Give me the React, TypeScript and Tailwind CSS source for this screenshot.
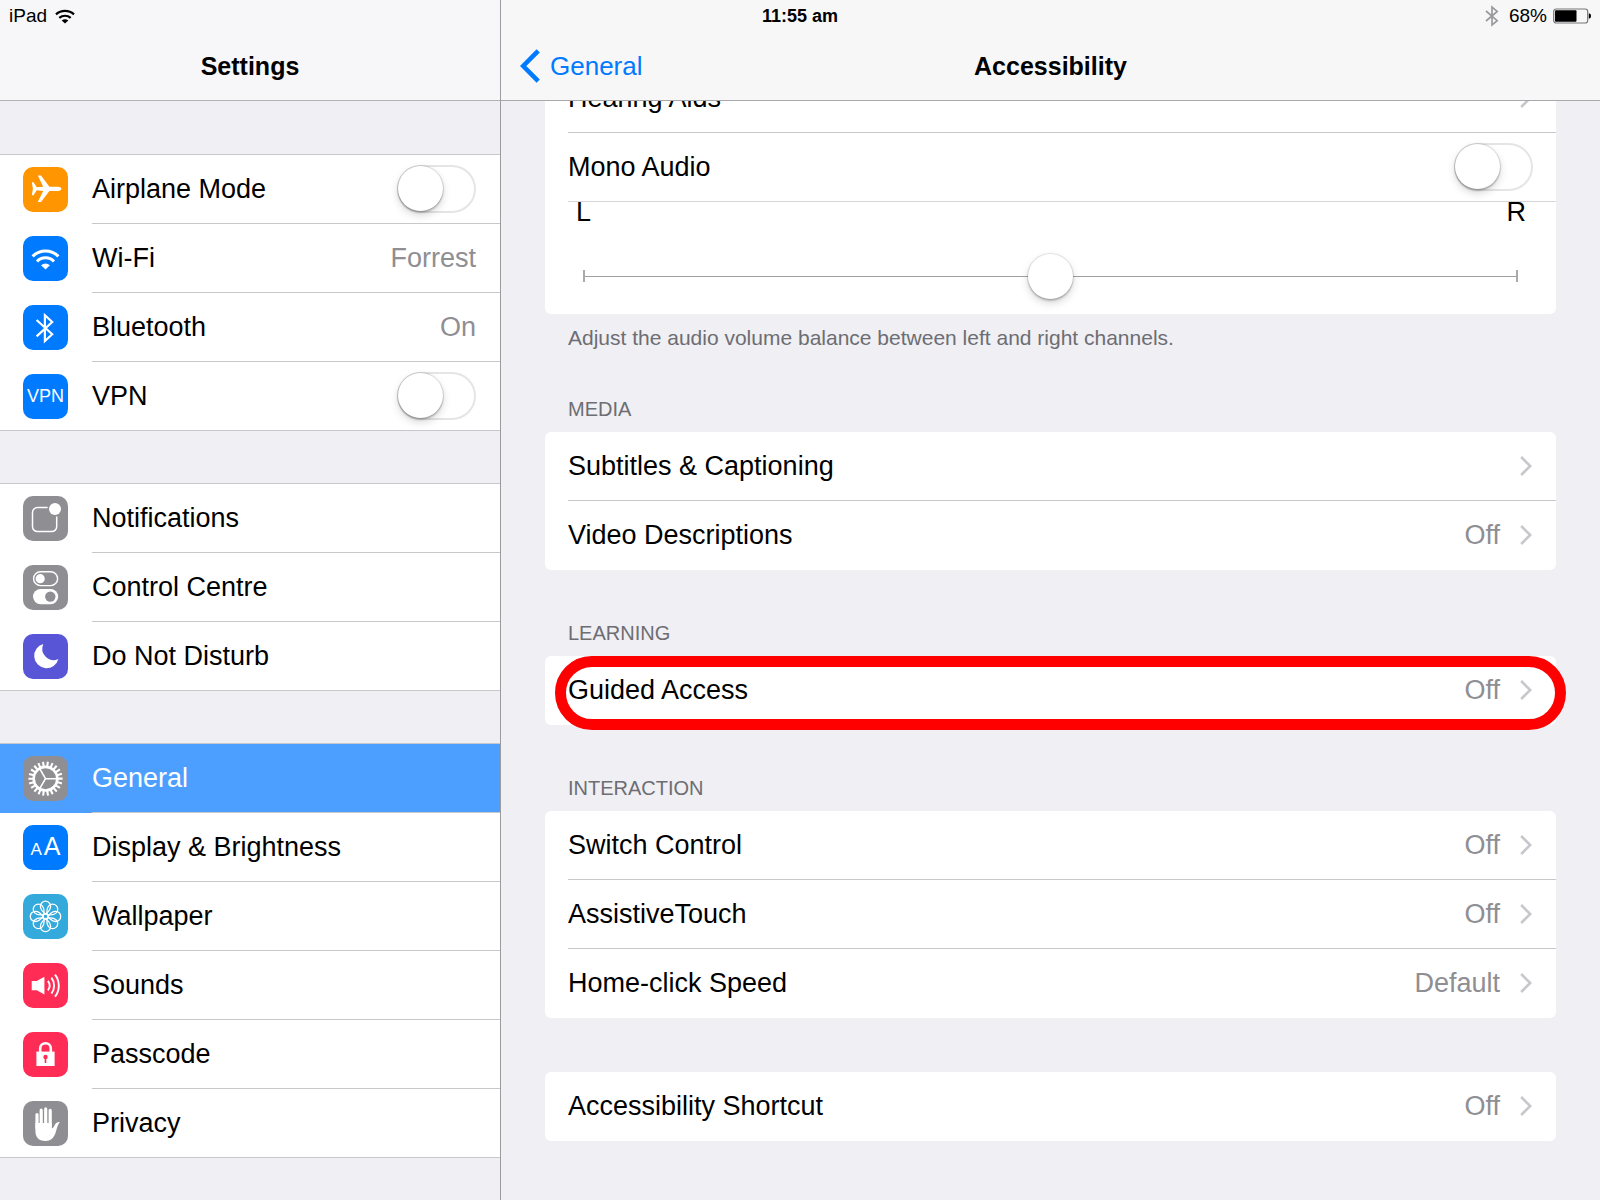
import type { ReactNode } from 'react';

/* ---------- Icons: every tile glyph is drawn on a 45 x 45 grid ---------- */

function Tile({ color, children }: { color: string; children: ReactNode }) {
  return (
    <span className={`flex size-[45px] shrink-0 items-center justify-center overflow-hidden rounded-[10px] text-white ${color}`}>
      {children}
    </span>
  );
}

function Glyph({ children }: { children: ReactNode }) {
  return (
    <svg viewBox="0 0 45 45" className="size-[45px]" fill="none" aria-hidden="true">
      {children}
    </svg>
  );
}

const AirplaneIcon = () => (
  <Tile color="bg-[#ff9500]">
    <Glyph>
      <path
        fill="#fff"
        d="M38.4 21.8c0-1.3-1.5-2.1-3.4-2.1h-8.6L18 8.6h-3.2l5.4 11.1-6.4.6-3.3-5H8.8l1.1 6.5-1.1 6.5h1.7l3.3-5 6.4.6-5.4 11.1H18l8.4-11.1H35c1.9 0 3.4-.8 3.4-2.1z"
      />
    </Glyph>
  </Tile>
);

const WifiTileIcon = () => (
  <Tile color="bg-[#007aff]">
    <Glyph>
      <path d="M9.6 20.400A18 18 0 0 1 35.4 20.400" stroke="#fff" strokeWidth="3" />
      <path d="M14 25.500A11.6 11.6 0 0 1 31 25.500" stroke="#fff" strokeWidth="3" />
      <path d="M22.5 33.4 18 29.2Q22.5 25.7 27 29.2z" fill="#fff" />
    </Glyph>
  </Tile>
);

const BluetoothTileIcon = () => (
  <Tile color="bg-[#007aff]">
    <Glyph>
      <path d="M13.6 15 29.2 29.2 21.9 36V10.200L29.2 17 13.6 31.4" stroke="#fff" strokeWidth="2.200" />
    </Glyph>
  </Tile>
);

const VpnIcon = () => (
  <Tile color="bg-[#007aff]">
    <span className="text-[18px] leading-5" aria-hidden="true">VPN</span>
  </Tile>
);

const NotificationsIcon = () => (
  <Tile color="bg-[#8e8e93]">
    <Glyph>
      <path d="M24.6 11.6H14.5a5 5 0 0 0-5 5v14a5 5 0 0 0 5 5h14.200a5 5 0 0 0 5-5V20.400" stroke="#fff" strokeWidth="1.5" />
      <circle cx="32" cy="13" r="6" fill="#fff" />
    </Glyph>
  </Tile>
);

const ControlCentreIcon = () => (
  <Tile color="bg-[#8e8e93]">
    <Glyph>
      <rect x="10.600" y="6.800" width="24" height="13.800" rx="6.900" stroke="#fff" strokeWidth="1.400" />
      <circle cx="17.200" cy="13.700" r="4.600" fill="#fff" />
      <rect x="10" y="24" width="25.200" height="15.200" rx="7.600" fill="#fff" />
      <circle cx="27.300" cy="31.600" r="5.200" fill="#8e8e93" />
    </Glyph>
  </Tile>
);

const MoonIcon = () => (
  <Tile color="bg-[#5856d6]">
    <Glyph>
      <path d="M20.300 10A12.300 12.300 0 1 0 35.400 25A11.400 11.400 0 0 1 20.300 10z" fill="#fff" />
    </Glyph>
  </Tile>
);

const TEETH = Array.from({ length: 22 }, (_, i) => (i * 360) / 22 + 8);

const GearIcon = () => (
  <Tile color="bg-[#8e8e93]">
    <Glyph>
      <g stroke="#fff">
        <circle cx="22.500" cy="22.700" r="11.800" strokeWidth="2.600" />
        {TEETH.map((a) => (
          <path key={a} d="M22.500 10.500V5.600" strokeWidth="2.100" transform={`rotate(${a} 22.500 22.700)`} />
        ))}
        <path d="M22.500 22.700H34M22.500 22.700 16.700 12.700M22.500 22.700 16.700 32.700" strokeWidth="1.600" />
      </g>
    </Glyph>
  </Tile>
);

const DisplayIcon = () => (
  <Tile color="bg-[#007aff]">
    <span className="flex items-baseline gap-0.5" aria-hidden="true">
      <span className="text-[17px] leading-6">A</span>
      <span className="text-[25px] leading-6">A</span>
    </span>
  </Tile>
);

const PETALS = [0, 45, 90, 135, 180, 225, 270, 315];

const WallpaperIcon = () => (
  <Tile color="bg-[#34aadc]">
    <Glyph>
      <g stroke="#fff" strokeWidth="1.300">
        {PETALS.map((a) => (
          <path
            key={a}
            d="M22.500 20C20 18.200 17.400 15.600 17.400 12.300A5.100 5.100 0 0 1 27.600 12.300C27.600 15.600 25 18.200 22.500 20z"
            transform={`rotate(${a} 22.500 22.400)`}
          />
        ))}
        <circle cx="22.500" cy="22.400" r="2.500" />
      </g>
    </Glyph>
  </Tile>
);

const SoundsIcon = () => (
  <Tile color="bg-[#ff2d55]">
    <Glyph>
      <path d="M8.700 18H13.800L21.400 13.800V31.500L13.800 27.300H8.700z" fill="#fff" />
      <g stroke="#fff" strokeWidth="1.900">
        <path d="M24.900 17.900A8 8 0 0 1 24.900 27.400" />
        <path d="M28.400 14.700A13 13 0 0 1 28.400 30.600" />
        <path d="M32 11.600A18 18 0 0 1 32 33.700" />
      </g>
    </Glyph>
  </Tile>
);

const PasscodeIcon = () => (
  <Tile color="bg-[#ff2d55]">
    <Glyph>
      <path d="M17.200 20V16.500a5.300 5.300 0 0 1 10.600 0V20" stroke="#fff" strokeWidth="2.600" />
      <rect x="13.400" y="19.600" width="18.200" height="14.400" fill="#fff" />
      <circle cx="22.500" cy="25" r="2.200" fill="#ff2d55" />
      <path d="M22.500 25V31" stroke="#ff2d55" strokeWidth="1.600" />
    </Glyph>
  </Tile>
);

const PrivacyIcon = () => (
  <Tile color="bg-[#8e8e93]">
    <Glyph>
      <path d="M14 27V13.500M18.200 25V9.200M22.700 25V7.900M27.200 25V9.400" stroke="#fff" strokeWidth="3.200" strokeLinecap="round" />
      <path
        d="M12.400 22H28.800V27.500C30 27.400 31 25.800 31.700 24.100C32.600 22 34.400 20.800 36.600 20.900C36.800 21.300 36.500 21.800 36 22.300C34.300 24.500 33.900 28 32.500 32C30.800 37 27.500 40 22.500 40C15.500 40 12.400 36 12.400 30z"
        fill="#fff"
      />
    </Glyph>
  </Tile>
);

const Chevron = () => (
  <svg viewBox="0 0 12 20" className="h-5 w-3 shrink-0" fill="none" aria-hidden="true">
    <path d="M1.200 1 10.200 10 1.200 19" stroke="#c7c7cc" strokeWidth="2.600" />
  </svg>
);

/* ---------- Controls ---------- */

function Toggle({ label }: { label: string }) {
  return (
    <input
      type="checkbox"
      role="switch"
      aria-label={label}
      className="relative h-12 w-[79px] shrink-0 appearance-none rounded-full bg-white shadow-[inset_0_0_0_2px_#e5e5e5] before:absolute before:top-px before:left-px before:size-[45px] before:rounded-full before:bg-white before:shadow-[0_4px_8px_rgba(0,0,0,0.16),0_2px_2px_rgba(0,0,0,0.18),0_0_1px_1px_rgba(0,0,0,0.12)] before:content-['']"
    />
  );
}

/* ---------- Sidebar ---------- */

type SideItem = { label: string; icon: ReactNode; value?: string; toggle?: boolean; selected?: boolean };

const sideGroups: SideItem[][] = [
  [
    { label: 'Airplane Mode', icon: <AirplaneIcon />, toggle: true },
    { label: 'Wi-Fi', icon: <WifiTileIcon />, value: 'Forrest' },
    { label: 'Bluetooth', icon: <BluetoothTileIcon />, value: 'On' },
    { label: 'VPN', icon: <VpnIcon />, toggle: true },
  ],
  [
    { label: 'Notifications', icon: <NotificationsIcon /> },
    { label: 'Control Centre', icon: <ControlCentreIcon /> },
    { label: 'Do Not Disturb', icon: <MoonIcon /> },
  ],
  [
    { label: 'General', icon: <GearIcon />, selected: true },
    { label: 'Display & Brightness', icon: <DisplayIcon /> },
    { label: 'Wallpaper', icon: <WallpaperIcon /> },
    { label: 'Sounds', icon: <SoundsIcon /> },
    { label: 'Passcode', icon: <PasscodeIcon /> },
    { label: 'Privacy', icon: <PrivacyIcon /> },
  ],
];

function SideRow({ item, last }: { item: SideItem; last: boolean }) {
  const row = `flex h-[69px] w-full items-stretch pl-[23px] text-left ${
    item.selected ? 'bg-[#4c9fff] text-white' : 'bg-white text-black'
  } ${last ? 'border-b border-[#c8c7cc]' : ''}`;
  const body = (
    <>
      <span className="flex items-center pr-6">{item.icon}</span>
      <span className={`flex flex-1 items-center justify-between pr-6 ${last ? '' : 'border-b border-[#c8c7cc]'}`}>
        <span>{item.label}</span>
        {item.value && <span className="text-[#8e8e93]">{item.value}</span>}
        {item.toggle && <Toggle label={item.label} />}
      </span>
    </>
  );
  return (
    <li>
      {item.toggle ? (
        <div className={row}>{body}</div>
      ) : (
        <button type="button" className={row} aria-current={item.selected ? 'page' : undefined}>
          {body}
        </button>
      )}
    </li>
  );
}

function Sidebar() {
  return (
    <aside className="flex w-[501px] shrink-0 flex-col border-r border-[#9c9ca0]">
      <header className="flex h-[101px] items-end justify-center border-b border-[#b2b2b2] bg-[#f7f7f9] pb-[18px]">
        <h1 className="text-[25px] font-bold">Settings</h1>
      </header>
      <nav className="flex flex-col gap-[52px] pt-[53px]" aria-label="Settings">
        {sideGroups.map((group, g) => (
          <ul key={g} className="border-t border-[#c8c7cc]">
            {group.map((item, i) => (
              <SideRow key={item.label} item={item} last={i === group.length - 1} />
            ))}
          </ul>
        ))}
      </nav>
    </aside>
  );
}

/* ---------- Detail pane ---------- */

function Card({ children }: { children: ReactNode }) {
  return <div className="rounded-md bg-white pl-[23px]">{children}</div>;
}

function LinkRow({ label, value, last }: { label: string; value?: string; last?: boolean }) {
  return (
    <button
      type="button"
      className={`flex h-[69px] w-full items-center border-b pr-6 text-left ${last ? 'border-transparent' : 'border-[#c8c7cc]'}`}
    >
      <span className="flex-1">{label}</span>
      {value && <span className="pr-5 text-[#8e8e93]">{value}</span>}
      <Chevron />
    </button>
  );
}

function SectionTitle({ children }: { children: ReactNode }) {
  return <h3 className="flex h-[86px] items-end pb-[11px] pl-[23px] text-[20px] leading-6 text-[#6d6d72]">{children}</h3>;
}

function Balance() {
  return (
    <div className="h-28 pr-[30px] pl-2">
      <div className="flex justify-between leading-5" aria-hidden="true">
        <span>L</span>
        <span>R</span>
      </div>
      <div className="relative mt-[31px] mr-2 ml-[7px] flex h-[46px] items-center">
        <div className="flex h-3 w-full items-center border-x-2 border-[#a9a9ab]">
          <div className="h-px w-full bg-[#a0a0a2]" />
        </div>
        <input
          type="range"
          min={-50}
          max={50}
          defaultValue={0}
          aria-label="Audio volume balance"
          className="absolute inset-0 h-full w-full appearance-none bg-transparent [&::-webkit-slider-thumb]:size-[45px] [&::-webkit-slider-thumb]:appearance-none [&::-webkit-slider-thumb]:rounded-full [&::-webkit-slider-thumb]:bg-white [&::-webkit-slider-thumb]:shadow-[0_4px_8px_rgba(0,0,0,0.16),0_2px_2px_rgba(0,0,0,0.18),0_0_1px_1px_rgba(0,0,0,0.1)]"
        />
      </div>
    </div>
  );
}

function Detail() {
  return (
    <main className="flex min-w-0 flex-1 flex-col">
      <header className="grid h-[101px] grid-cols-[1fr_auto_1fr] items-end border-b border-[#a9a9ab] bg-[#f7f7f8] px-[19px] pb-[18px]">
        <a href="#general" className="flex items-center gap-2.5 text-[26px] text-[#007aff]">
          <svg viewBox="0 0 20 34" className="-my-1 h-[34px] w-5" fill="none" aria-hidden="true">
            <path d="M18.200 1.800 3.200 17 18.200 32.200" stroke="#007aff" strokeWidth="4.600" />
          </svg>
          General
        </a>
        <h2 className="text-[25px] font-bold">Accessibility</h2>
      </header>

      <div className="flex-1 overflow-hidden px-11">
        <div className="-mt-[37px]">
          <Card>
            <LinkRow label="Hearing Aids" />
            <div className="flex h-[69px] items-center justify-between border-b border-[#d6d6da] pr-[23px]">
              <span>Mono Audio</span>
              <Toggle label="Mono Audio" />
            </div>
            <Balance />
          </Card>
        </div>
        <p className="h-8 pt-3 pl-[23px] text-[21px] leading-6 text-[#6d6d72]">
          Adjust the audio volume balance between left and right channels.
        </p>

        <SectionTitle>MEDIA</SectionTitle>
        <Card>
          <LinkRow label="Subtitles & Captioning" />
          <LinkRow label="Video Descriptions" value="Off" last />
        </Card>

        <SectionTitle>LEARNING</SectionTitle>
        <div className="relative">
          <Card>
            <LinkRow label="Guided Access" value="Off" last />
          </Card>
          <div className="pointer-events-none absolute top-0 -right-2.5 -bottom-[5px] left-2.5 rounded-full border-[11px] border-[#ff0000]" />
        </div>

        <SectionTitle>INTERACTION</SectionTitle>
        <Card>
          <LinkRow label="Switch Control" value="Off" />
          <LinkRow label="AssistiveTouch" value="Off" />
          <LinkRow label="Home-click Speed" value="Default" last />
        </Card>

        <div className="mt-[54px]">
          <Card>
            <LinkRow label="Accessibility Shortcut" value="Off" last />
          </Card>
        </div>
      </div>
    </main>
  );
}

/* ---------- Status bar, laid over both headers ---------- */

function StatusBar() {
  return (
    <div className="absolute inset-x-0 top-0 grid h-8 grid-cols-[1fr_auto_1fr] items-center px-[9px] text-[19px] leading-6">
      <div className="flex items-center gap-2">
        <span>iPad</span>
        <svg viewBox="0 0 20 15" className="h-[15px] w-5" fill="none" aria-label="Wi-Fi">
          <path d="M1 5.400A13.500 13.500 0 0 1 19 5.400" stroke="#000" strokeWidth="2.200" />
          <path d="M4.300 8.900A8.600 8.600 0 0 1 15.700 8.900" stroke="#000" strokeWidth="2.200" />
          <path d="M10 14.600 6.700 11.500Q10 8.800 13.300 11.500z" fill="#000" />
        </svg>
      </div>
      <span className="text-[18px] font-bold">11:55 am</span>
      <div className="flex items-center justify-end gap-1.5">
        <svg viewBox="0 0 14 22" className="mr-1 h-[22px] w-3.5" fill="none" aria-label="Bluetooth">
          <path d="M1 6 12.200 15.700 7 20V2L12.200 6.400 1 16" stroke="#9a9a9c" strokeWidth="1.700" />
        </svg>
        <span>68%</span>
        <svg viewBox="0 0 38 16" className="h-4 w-[38px]" fill="none" aria-label="Battery">
          <rect x="0.700" y="1" width="34" height="14" rx="2.500" stroke="#77777a" strokeWidth="1.200" />
          <rect x="2" y="2.300" width="21.500" height="11.400" rx="1" fill="#000" />
          <path d="M35.800 5.500h.7q1.500.4 1.500 2.500t-1.500 2.500h-.7z" fill="#000" />
        </svg>
      </div>
    </div>
  );
}

export default function App() {
  return (
    <div className="relative flex min-h-screen bg-[#efeff4] font-['Liberation_Sans',Arial,sans-serif] text-[27px] leading-8 text-black">
      <Sidebar />
      <Detail />
      <StatusBar />
    </div>
  );
}
